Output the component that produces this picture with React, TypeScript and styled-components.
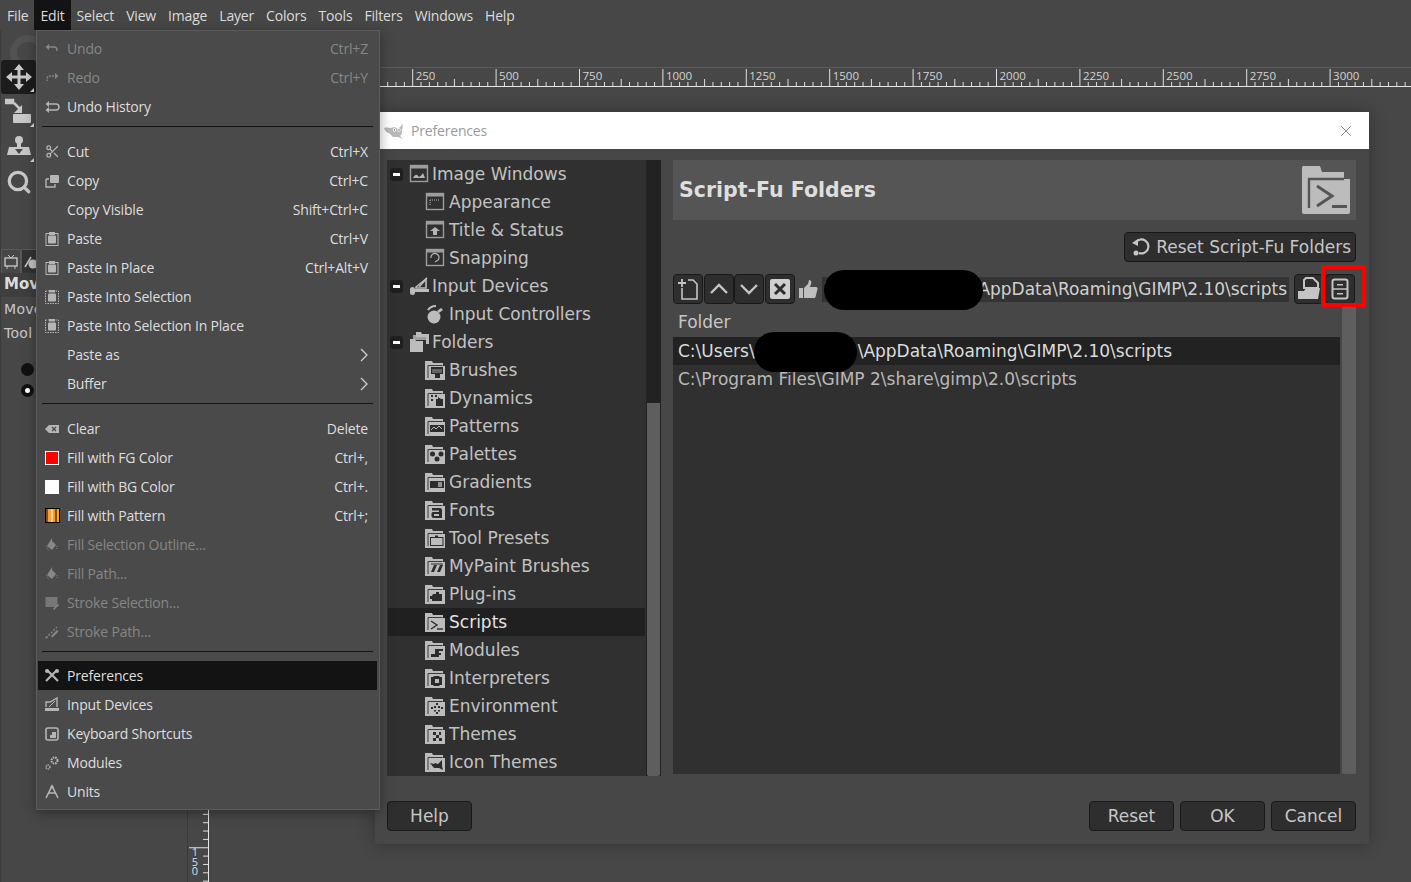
import React from "react";
import styled, { createGlobalStyle } from "styled-components";
import { Scissors, Search, X as CloseX } from "lucide-react";

const Global = createGlobalStyle`
  html, body { margin: 0; padding: 0; background: #474747; overflow: hidden; }
  * { box-sizing: border-box; }
`;

const UI = `"Open Sans", "Noto Sans", sans-serif`;
const DV = `"DejaVu Sans", Verdana, sans-serif`;

const Desktop = styled.div`
  position: relative; width: 1411px; height: 882px; overflow: hidden; background: #474747;
  font-family: ${UI}; color: #dcdcdc; display: flex; flex-direction: column;
`;
const MenuBar = styled.div`display: flex; height: 30px; padding-left: 1px; flex: none;`;
const MenuBarItem = styled.div<{ $open?: boolean }>`
  padding: 0 6px; line-height: 31px; font-size: 14px; letter-spacing: -0.18px;
  background: ${p => (p.$open ? "#131313" : "transparent")};
`;
const Workspace = styled.div`flex: 1; display: flex; min-height: 0;`;
const Toolbox = styled.div`
  width: 188px; flex: none; border-left: 1px solid #3c3c3c; border-right: 1px solid #3a3a3a;
  display: flex; flex-direction: column; position: relative; overflow: hidden;
`;
const Ghost = styled.div`
  position: absolute; left: 9px; top: 5px; width: 36px; height: 36px; border-radius: 50%;
  border: 7px solid #525252;
`;
const ToolGrid = styled.div`display: flex; flex-direction: column; padding-top: 30px; gap: 1px;`;
const ToolBtn = styled.div<{ $active?: boolean }>`
  position: relative; width: 35px; height: 34px; display: flex; align-items: center; justify-content: center;
  border-radius: 3px; color: #c8c8c8; background: ${p => (p.$active ? "#1c1c1c" : "transparent")};
  &::after { content: ""; position: absolute; right: 2px; bottom: 2px; border: 2px solid transparent;
    border-right-color: ${p => (p.$corner ? "#ddd" : "transparent")}; border-bottom-color: ${p => (p.$corner ? "#ddd" : "transparent")}; }
` as any;
const DockTabs = styled.div`display: flex; margin-top: 50px; height: 24px; align-items: stretch;`;
const DockTab = styled.div<{ $active?: boolean }>`
  width: 20px; display: flex; align-items: center; justify-content: center; color: #c4c4c4;
  background: ${p => (p.$active ? "#474747" : "#333")};
  border: 1px solid #5a5a5a; border-bottom: none; border-radius: 2px 2px 0 0;
`;
const DockTitle = styled.div`background: #3e3e3e; height: 24px; line-height: 23px; font: bold 15px/23px ${DV}; padding-left: 3px; white-space: nowrap;`;
const DockText = styled.div`font: 14px/20px ${DV}; padding-left: 3px; margin-top: 2px; color: #c8c8c8; white-space: nowrap; letter-spacing: .3px;`;
const DockTextB = styled(DockText)`margin-top: 4px;`;
const Radio = styled.div<{ $on?: boolean }>`
  width: 13px; height: 13px; border-radius: 50%; background: #111; margin: 0 0 8px 20px; position: relative;
  &:first-of-type { margin-top: 10px; }
  &::after { content: ""; position: absolute; left: 4px; top: 4px; width: 5px; height: 5px; border-radius: 50%;
    background: ${p => (p.$on ? "#fff" : "transparent")}; }
`;
const RadioList = styled.div`display: flex; flex-direction: column; padding-top: 10px;`;
const VRuler = styled.div`width: 21px; flex: none; margin-left: 1px; padding-top: 57px;`;
const Canvas = styled.div`flex: 1; display: flex; flex-direction: column; min-width: 0;`;
const TabStrip = styled.div`height: 38px; flex: none; border-bottom: 1px solid #5c5c5c;`;
const HRuler = styled.div`height: 20px; flex: none;`;

const Menu = styled.div`
  position: absolute; left: 36px; top: 30px; width: 344px; height: 780px; background: #4a4a4a;
  border: 1px solid #5c5c5c; padding: 3px 2px 3px 1px; box-shadow: 0 3px 12px rgba(0,0,0,.35); z-index: 3;
`;
const Row = styled.div<{ $off?: boolean; $sel?: boolean }>`
  height: 29px; display: flex; align-items: center; padding: 0 9px 0 6px; font-size: 14px; letter-spacing: -0.18px;
  color: ${p => (p.$off ? "#868686" : "#dedede")}; background: ${p => (p.$sel ? "#131313" : "transparent")};
`;
const IconSlot = styled.span<{ $off?: boolean }>`
  width: 16px; height: 16px; flex: none; margin-right: 7px; display: flex; align-items: center; justify-content: center;
  color: ${p => (p.$off ? "#878787" : "#b5b5b5")};
`;
const RowLabel = styled.span`flex: 1; white-space: nowrap;`;
const Accel = styled.span`white-space: nowrap;`;
const Sep = styled.div<{ $tail?: number }>`height: 1px; background: #141414; margin: 5px 4px ${p => p.$tail ?? 10}px 4px;`;
const Swatch = styled.span<{ $kind: string }>`
  width: 14px; height: 14px; display: block;
  ${p => p.$kind === "fg" && "background:#f00; border:1px solid #fff;"}
  ${p => p.$kind === "bg" && "background:#fff;"}
  ${p => p.$kind === "pat" && "width:15px; height:15px; border:1px solid #000; background:repeating-linear-gradient(90deg,#8a4b10 0 2px,#f7a33a 2px 5px,#ffd27a 5px 7px,#f39b2b 7px 9px);"}
`;

const Dialog = styled.div`
  position: absolute; left: 375px; top: 112px; width: 994px; height: 732px; background: #474747;
  box-shadow: 0 0 16px rgba(0,0,0,.3); display: flex; flex-direction: column; z-index: 2; font-family: ${DV};
`;
const TitleBar = styled.div`
  height: 37px; flex: none; background: #fff; display: flex; align-items: center; padding: 0 14px 0 9px;
  font: 14px ${UI}; letter-spacing: -.18px; color: #9a9a9a;
`;
const TitleText = styled.span`flex: 1; margin-left: 5px;`;
const Body = styled.div`flex: 1; display: flex; padding: 11px 13px 0 12px; gap: 12px; min-height: 0;`;
const TreePane = styled.div`width: 274px; height: 616px; flex: none; display: flex;`;
const Tree = styled.div`flex: 1; background: #303030;`;
const TreeRow = styled.div<{ $level: number; $sel?: boolean }>`
  height: 28px; display: flex; align-items: center; font-size: 17px; white-space: nowrap;
  padding-left: ${p => (p.$level ? 37 : 2)}px; margin-left: 1px; margin-right: 1px;
  background: ${p => (p.$sel ? "#202020" : "transparent")}; color: ${p => (p.$sel ? "#e2e2e2" : "#c2c2c2")};
`;
const Expander = styled.span`
  width: 13px; height: 13px; border-radius: 3px; background: #1f1f1f; display: flex; align-items: center; justify-content: center;
  margin-right: 6px;
  &::after { content: ""; width: 7px; height: 3px; background: #fff; }
`;
const TreeLabel = styled.span<{ $level: number }>`margin-left: ${p => (p.$level ? 4 : 3)}px;`;
const Trough = styled.div`width: 15px; background: #222; display: flex; flex-direction: column; justify-content: flex-end; padding: 0 1px;`;
const Thumb = styled.div`height: 373px; background: #5e5e5e; border-radius: 0 0 2px 2px;`;
const Page = styled.div`flex: 1; display: flex; flex-direction: column; min-width: 0;`;
const Header = styled.div`
  height: 60px; flex: none; background: #555; display: flex; align-items: center; justify-content: space-between; padding: 0 6px;
`;
const Heading = styled.div`font-size: 20.5px; font-weight: bold; color: #dedede;`;
const ResetRow = styled.div`display: flex; justify-content: flex-end; margin-top: 12px;`;
const Btn = styled.div<{ $w?: number }>`
  height: 30px; ${p => (p.$w ? `width:${p.$w}px;` : "")} background: #2e2e2e; border: 1px solid #191919; border-radius: 4px;
  display: flex; align-items: center; justify-content: center; color: #c6c6c6; font-size: 17px; flex: none; white-space: nowrap;
`;
const ResetBtn = styled(Btn)`padding: 0 4px 0 5px; gap: 4px;`;
const EntryRow = styled.div`display: flex; align-items: center; margin-top: 12px; height: 30px; position: relative;`;
const IconBtn = styled(Btn)`width: 30px; color: #c4c4c4; margin-right: 0.5px;`;
const ThumbMark = styled.span`width: 20px; margin: 0 4px 0 3px; display: flex; flex: none; color: #bfbfbf;`;
const Entry = styled.div`
  flex: none; width: 467px; height: 25px; background: #333; color: #d0d0d0; font-size: 17px; display: flex; align-items: center;
  justify-content: space-between; padding: 0 2px 0 3px; margin-right: 5px; position: relative; white-space: nowrap;
`;
const EntryBlot = styled.div`position: absolute; left: 2px; top: -7px; width: 159px; height: 40px; background: #000; border-radius: 20px;`;
const RedBox = styled.div`
  position: absolute; right: -10px; top: -9px; width: 45px; height: 42px; border: 4px solid #f00; border-radius: 2px; pointer-events: none;
`;
const FolderPane = styled.div`display: flex; margin-top: 3px; height: 467px; gap: 2px;`;
const Table = styled.div`flex: 1; background: #303030; display: flex; flex-direction: column; min-width: 0;`;
const TableHead = styled.div`height: 30px; background: #474747; color: #c6c6c6; font-size: 17px; line-height: 30px; padding-left: 5px; flex: none;`;
const TableRow = styled.div<{ $sel?: boolean }>`
  height: 28px; line-height: 28px; font-size: 17px; padding-left: 5px; white-space: nowrap; flex: none;
  background: ${p => (p.$sel ? "#222" : "transparent")}; color: ${p => (p.$sel ? "#dcdcdc" : "#b9b9b9")};
`;
const Gap = styled.span`display: inline-block; width: 103px; height: 1px; position: relative;`;
const RowBlot = styled.span`position: absolute; left: -1px; top: -24px; width: 103px; height: 40px; background: #000; border-radius: 20px;`;
const TableScroll = styled.div`width: 14px; background: #5e5e5e; border-radius: 0 0 2px 2px; flex: none;`;
const Footer = styled.div`
  display: flex; justify-content: space-between; padding: 0 13px 13px 12px; flex: none; height: 43px; margin-top: -1px;
`;
const FootGroup = styled.div`display: flex; gap: 6px;`;
const Spacer = styled.div`height: 25px; flex: none;`;

/* ---------- drawings ---------- */
const S = ({ children, size = 16, box = 16 }: { children: React.ReactNode; size?: number; box?: number }) => (
  <svg width={size} height={size} viewBox={`0 0 ${box} ${box}`} fill="currentColor" stroke="none" aria-hidden>
    {children}
  </svg>
);
const L = (p: any) => <path fill="none" stroke="currentColor" strokeWidth={1.4} {...p} />;

const menuIcons: Record<string, React.ReactNode> = {
  undo: <S><L d="M3 6h7a3 3 0 0 1 3 3v1" /><path d="M1.5 6 5 3v6z" /></S>,
  redo: <S><L d="M13 6H6a3 3 0 0 0-3 3v2" strokeDasharray="2 1" /><path d="M14.5 6 11 3v6z" /></S>,
  history: <S><L d="M4 5h8M12 11H5" strokeWidth={1.6} /><L d="M12 5a3 3 0 0 1 0 6" /><path d="M1.5 5 5 2v6zM1.5 11l3.5-3v6z" /></S>,
  cut: <Scissors size={15} strokeWidth={2} />,
  copy: <S><rect x="6" y="2" width="9" height="8" rx="1" /><L d="M2 6h3M2 6v8h9v-3" /></S>,
  paste: <S><rect x="2" y="2.5" width="12" height="12" fill="none" stroke="currentColor" /><rect x="4" y="4.5" width="8" height="8" rx="1" /><rect x="5" y="1" width="6" height="3" /></S>,
  pasteSel: <S><rect x="1.5" y="2" width="13" height="12.5" fill="none" stroke="currentColor" strokeDasharray="1.5 1" /><rect x="4" y="4.5" width="8" height="8" rx="1" /><rect x="5" y="1" width="6" height="2.5" /></S>,
  clear: <S><path d="M1 8l4-4h10v8H5z" /><path d="M8 6l4 4M12 6l-4 4" stroke="#4a4a4a" strokeWidth={1.3} /></S>,
  fill: <S><path d="M8 1v3l4 4-4 5-5-4z" /><path d="M2 9l3 5M13 9v3" stroke="currentColor" fill="none" strokeDasharray="1 1" /></S>,
  strokeSel: <S><rect x="1.5" y="2" width="12" height="10" opacity=".75" /><path d="M9 14l5-5 1 1-5 5z" /></S>,
  strokePath: <S><L d="M2 14 13 3" strokeDasharray="2 1.5" /><path d="M7 12l6-6 1.5 1.5-6 6z" /><circle cx="2.5" cy="13.5" r="1" /></S>,
  prefs: <S><L d="M3 2l11 11M13 2 2 13" strokeWidth={2.2} /><circle cx="13" cy="3" r="2" /><circle cx="3" cy="3" r="2" /></S>,
  input: <S><path d="M1 11h14v3H1z" /><L d="M2 10V5h4l7-4v9" /><path d="M5 10l6-6" stroke="currentColor" /></S>,
  keys: <S><rect x="2" y="2" width="12" height="12" rx="2" fill="none" stroke="currentColor" strokeWidth={1.6} /><rect x="8" y="6" width="4" height="6" /><rect x="6" y="9" width="3" height="3" /></S>,
  modules: <S><circle cx="10.5" cy="5.5" r="3" fill="none" stroke="currentColor" strokeWidth={2} strokeDasharray="1.6 .8" /><circle cx="4" cy="12" r="2" fill="none" stroke="currentColor" strokeWidth={1.4} strokeDasharray="1.2 .8" /></S>,
  units: <S><L d="M2 14 8 2l6 12M4 9h8" strokeWidth={1.6} /><circle cx="8" cy="3" r="1.6" /></S>,
};

const Frame = ({ children }: { children?: React.ReactNode }) => (
  <S size={20} box={20}>
    <rect x="1.5" y="1.5" width="17" height="16" fill="none" stroke="#9d9d9d" strokeWidth={1.4} />
    <rect x="1" y="1" width="18" height="3.5" fill="#9d9d9d" />
    <g fill="#b5b5b5" stroke="#b5b5b5">{children}</g>
  </S>
);

const Folder = ({ children }: { children?: React.ReactNode }) => (
  <S size={20} box={20}>
    <path d="M0 1h7l1 2h10v3h2v14H0z" fill="#bcbcbc" />
    <path d="M3 5.5h14.5M3 5.5V18" stroke="#3b3b3b" strokeWidth={1} fill="none" />
    <g fill="#2c2c2c" stroke="none">{children}</g>
  </S>
);

const treeIcons: Record<string, React.ReactNode> = {
  win: <Frame><path d="M4 14c2-4 4-4 5-2s3 0 5-3l2 5z" stroke="none" /></Frame>,
  app: <Frame><path d="M5 8h10M5 8v6" fill="none" strokeDasharray="1 1" /></Frame>,
  title: <Frame><path d="M10 7l5 4h-3v4H8v-4H5z" stroke="none" /></Frame>,
  snap: <Frame><path d="M6 10a4 4 0 1 1 7 2l-3 2" fill="none" strokeWidth={1.2} /></Frame>,
  input: <S size={20} box={20}><g fill="#bcbcbc"><path d="M7 11 17 3v9H7z" fillOpacity="0" stroke="#bcbcbc" strokeWidth={1.6} /><path d="M6 13h14v3H6z" /><rect x="1" y="11" width="5" height="8" rx="2.5" /><path d="M10 11l8-9" stroke="#bcbcbc" strokeWidth={1.6} /></g></S>,
  ctrl: <S size={20} box={20}><g fill="#bcbcbc"><circle cx="9" cy="13" r="6.5" /><path d="M3 6a9 9 0 0 1 8-4" fill="none" stroke="#bcbcbc" strokeWidth={2.2} /><path d="M12 7l4-3 2 2-4 3z" /></g></S>,
  folders: <S size={20} box={20}><g fill="#bcbcbc"><path d="M7 0h5l1 2h7v10h-3V5H7z" /><path d="M4 3h5l1 2h7v3H4z" opacity=".8" /><path d="M1 7h5l1 2h7v11H1z" /></g></S>,
  brushes: <Folder><path d="M6 7h12v7h-3v4h-5v-4H6z" /><path d="M7 10h10M7 12h10" stroke="#bcbcbc" strokeWidth={.8} /></Folder>,
  dynamics: <Folder><rect x="6" y="7" width="2" height="2" /><rect x="10" y="7" width="2" height="2" /><rect x="6" y="11" width="2" height="2" /><path d="M11 11h2v-2l3 2h2v7h-7z" /></Folder>,
  patterns: <Folder><rect x="5" y="9" width="14" height="7" /><path d="M6 14l3-3 2 2 3-3 3 3" stroke="#bcbcbc" strokeWidth={1} fill="none" /></Folder>,
  palettes: <Folder><circle cx="7.5" cy="10" r="2.5" /><circle cx="16" cy="10" r="2.5" /><circle cx="12" cy="15" r="2.5" /></Folder>,
  gradients: <Folder><rect x="5" y="9" width="14" height="7" /><rect x="13" y="10" width="4" height="5" fill="#bcbcbc" opacity=".7" /></Folder>,
  fonts: <Folder><path d="M7 8h8a2 2 0 0 1 2 2v8H9a2.5 2.5 0 0 1-2.5-2.5V14A2 2 0 0 1 9 12h5v-1.500H7z" /><rect x="9" y="14" width="5" height="2" fill="#bcbcbc" /></Folder>,
  presets: <Folder><rect x="5.500" y="9.500" width="12.500" height="8" fill="none" stroke="#2c2c2c" /><rect x="10" y="7.500" width="3" height="2" /></Folder>,
  mypaint: <Folder><path d="M6 16 9 9h3l-3 7zM12 16l3-7h3l-3 7z" /><path d="M6 8h12" stroke="#2c2c2c" /></Folder>,
  plugins: <Folder><path d="M8 10h3V8h3v2h3v7H7v-2h-2v-3h2z" /></Folder>,
  scripts: <Folder><path d="M6 9l6 4-6 4" fill="none" stroke="#2c2c2c" strokeWidth={1.4} /><path d="M12 17h6" stroke="#2c2c2c" strokeWidth={1.4} /></Folder>,
  modules: <Folder><path d="M10 9h8v2h-4v2h2v2h-2v2H6v-3h4z" /></Folder>,
  interp: <Folder><path d="M6 9l2 0 1-1h5l1 1h2v8h-2l-1 1H9l-1-1H6z" /><rect x="10" y="11" width="4" height="4" fill="#bcbcbc" /></Folder>,
  env: <Folder><g><rect x="11" y="7" width="2" height="2" /><rect x="11" y="16" width="2" height="2" /><rect x="6" y="11" width="2" height="2" /><rect x="9" y="10" width="2" height="2" /><rect x="13" y="10" width="2" height="2" /><rect x="9" y="14" width="2" height="1.500" /><rect x="13" y="14" width="2" height="1.500" /><rect x="16" y="11" width="2" height="2" /></g></Folder>,
  themes: <Folder><path d="M8 8h3v3H8zM11 11h3v3h-3zM8 14h3v3H8zM14 14h3v3h-3zM14 8h2v3h-2z" /></Folder>,
  iconThemes: <Folder><path d="M5 11l4 1 1-1 3 1 4-4v6l1 4-4-2H9z" /></Folder>,
};

const Wilber = () => (
  <svg width="22" height="18" viewBox="0 0 22 18" aria-hidden>
    <path d="M0 6c3-1 5 0 7 0 2-1 5-1 7 1l5-5-1 7c0 3-1 4-2 5l3 3-5-2H9L5 11C3 11 1 9 0 6z" fill="#b9b9b9" />
    <circle cx="10.500" cy="8" r="1.700" fill="#fff" /><circle cx="15" cy="8" r="1.700" fill="#fff" />
    <circle cx="10.500" cy="8" r=".7" fill="#555" /><circle cx="15" cy="8" r=".7" fill="#555" />
  </svg>
);

const BigFolder = () => (
  <svg width="48" height="48" viewBox="0 0 48 48" aria-hidden>
    <path d="M1 0h17l2 6h22v7h6v33a2 2 0 0 1-2 2H2a2 2 0 0 1-2-2V1z" fill="#bcbcbc" />
    <path d="M7 42V13h35" fill="none" stroke="#555" strokeWidth={2.400} />
    <path d="M15 20l15 10-15 10" fill="none" stroke="#555" strokeWidth={3} />
    <path d="M30 40.500h15" stroke="#555" strokeWidth={3} />
  </svg>
);

const Ruler = () => {
  const w = 1201, x0 = 329.3 - 210, step = 83.4, out: React.ReactNode[] = [];
  for (let i = 0; i * step / 10 + x0 < w; i++) {
    const x = x0 + (i * step) / 10;
    const major = i % 10 === 0;
    const mid = i % 5 === 0;
    out.push(<line key={i} x1={x} x2={x} y1={major ? 1 : mid ? 11 : 14} y2={18} stroke="#e0e0e0" strokeWidth={1} />);
    if (major && i > 0) out.push(<text key={"t" + i} x={x + 3} y={12} fontSize="11.500" fontFamily={UI} fill="#d4d4d4">{i * 25}</text>);
  }
  return (
    <svg width={w} height={20} aria-hidden>
      {out}
      <line x1={0} x2={w} y1={18.500} y2={18.500} stroke="#e6e6e6" />
    </svg>
  );
};

const SideRuler = () => {
  const h = 100, ticks: React.ReactNode[] = [];
  for (let i = 0; i < 12; i++) {
    const y = 2 + i * 8.35;
    ticks.push(<line key={i} x1={i === 5 ? 0 : i === 10 ? 8 : 14} x2={19} y1={y} y2={y} stroke="#e0e0e0" />);
  }
  return (
    <svg width={20} height={h} aria-hidden>
      {ticks}
      <line x1={19.500} x2={19.500} y1={0} y2={h} stroke="#e6e6e6" />
      {["1", "5", "0"].map((d, i) => (
        <text key={i} x={6} y={52 + i * 9.500} fontSize="11" fontFamily={UI} fill="#cfe0e8" textAnchor="middle">{d}</text>
      ))}
    </svg>
  );
};

/* ---------- data ---------- */
type Item = { l: string; a?: string; i?: string; off?: boolean; sub?: boolean; sel?: boolean; sw?: string } | { sep: number };
const items: Item[] = [
  { l: "Undo", a: "Ctrl+Z", i: "undo", off: true },
  { l: "Redo", a: "Ctrl+Y", i: "redo", off: true },
  { l: "Undo History", i: "history" },
  { sep: 10 },
  { l: "Cut", a: "Ctrl+X", i: "cut" },
  { l: "Copy", a: "Ctrl+C", i: "copy" },
  { l: "Copy Visible", a: "Shift+Ctrl+C" },
  { l: "Paste", a: "Ctrl+V", i: "paste" },
  { l: "Paste In Place", a: "Ctrl+Alt+V", i: "paste" },
  { l: "Paste Into Selection", i: "pasteSel" },
  { l: "Paste Into Selection In Place", i: "pasteSel" },
  { l: "Paste as", sub: true },
  { l: "Buffer", sub: true },
  { sep: 10 },
  { l: "Clear", a: "Delete", i: "clear" },
  { l: "Fill with FG Color", a: "Ctrl+,", sw: "fg" },
  { l: "Fill with BG Color", a: "Ctrl+.", sw: "bg" },
  { l: "Fill with Pattern", a: "Ctrl+;", sw: "pat" },
  { l: "Fill Selection Outline...", i: "fill", off: true },
  { l: "Fill Path...", i: "fill", off: true },
  { l: "Stroke Selection...", i: "strokeSel", off: true },
  { l: "Stroke Path...", i: "strokePath", off: true },
  { sep: 9 },
  { l: "Preferences", i: "prefs", sel: true },
  { l: "Input Devices", i: "input" },
  { l: "Keyboard Shortcuts", i: "keys" },
  { l: "Modules", i: "modules" },
  { l: "Units", i: "units" },
];
const tree: [string, number, string][] = [
  ["Image Windows", 0, "win"], ["Appearance", 1, "app"], ["Title & Status", 1, "title"], ["Snapping", 1, "snap"],
  ["Input Devices", 0, "input"], ["Input Controllers", 1, "ctrl"], ["Folders", 0, "folders"], ["Brushes", 1, "brushes"],
  ["Dynamics", 1, "dynamics"], ["Patterns", 1, "patterns"], ["Palettes", 1, "palettes"], ["Gradients", 1, "gradients"],
  ["Fonts", 1, "fonts"], ["Tool Presets", 1, "presets"], ["MyPaint Brushes", 1, "mypaint"], ["Plug-ins", 1, "plugins"],
  ["Scripts", 1, "scripts"], ["Modules", 1, "modules"], ["Interpreters", 1, "interp"], ["Environment", 1, "env"],
  ["Themes", 1, "themes"], ["Icon Themes", 1, "iconThemes"],
];
const bar = ["File", "Edit", "Select", "View", "Image", "Layer", "Colors", "Tools", "Filters", "Windows", "Help"];

const Chevron = ({ up }: { up?: boolean }) => (
  <svg width="20" height="20" viewBox="0 0 20 20" aria-hidden>
    <path d={up ? "M2 14l8-8 8 8" : "M2 6l8 8 8-8"} fill="none" stroke="currentColor" strokeWidth={2.400} />
  </svg>
);

export default function App() {
  return (
    <Desktop>
      <Global />
      <MenuBar>
        {bar.map(b => <MenuBarItem key={b} $open={b === "Edit"}>{b}</MenuBarItem>)}
      </MenuBar>
      <Workspace>
        <Toolbox>
          <Ghost />
          <ToolGrid>
            <ToolBtn $active $corner>
              <S size={26} box={26}>
                <path d="M13 3v20M3 13h20" stroke="currentColor" strokeWidth={3} />
                <path d="M13 0l5 6H8zM13 26l5-6H8zM0 13l6-5v10zM26 13l-6-5v10z" />
              </S>
            </ToolBtn>
            <ToolBtn $corner>
              <S size={28} box={28}>
                <path d="M1 2h7v3H1zM9 5l7 7" stroke="currentColor" strokeWidth={2.500} />
                <path d="M17 7v8H9z" /><rect x="8" y="16" width="18" height="9" rx="1" />
              </S>
            </ToolBtn>
            <ToolBtn $corner>
              <S size={26} box={26}>
                <circle cx="13" cy="6" r="4" /><path d="M11 8h4v5h8l2 8H1l2-8h8z" />
                <path d="M9 15h8l-4 5z" fill="#474747" />
              </S>
            </ToolBtn>
            <ToolBtn><Search size={26} strokeWidth={3} /></ToolBtn>
          </ToolGrid>
          <DockTabs>
            <DockTab $active>
              <S size={14} box={14}><rect x="1" y="3" width="12" height="8" fill="none" stroke="currentColor" strokeWidth={1.400} /><path d="M4 0l3 3 3-3M3 11v3M11 11v3" stroke="currentColor" fill="none" /></S>
            </DockTab>
            <DockTab>
              <S size={14} box={14}><path d="M1 12 7 2" stroke="currentColor" strokeWidth={1.500} /><circle cx="9" cy="9" r="4.500" /></S>
            </DockTab>
          </DockTabs>
          <DockTitle>Move</DockTitle>
          <DockText>Move</DockText>
          <DockTextB>Tool Toggle</DockTextB>
          <RadioList>
            <Radio />
            <Radio $on />
          </RadioList>
        </Toolbox>
        <VRuler><Spacer /><SpacerOffset /><SideRuler /></VRuler>
        <Canvas>
          <TabStrip />
          <HRuler><Ruler /></HRuler>
        </Canvas>
      </Workspace>

      <Menu>
        {items.map((it, n) => {
          if ("sep" in it) return <Sep key={n} $tail={it.sep} />;
          return (
            <Row key={n} $off={it.off} $sel={it.sel}>
              <IconSlot $off={it.off}>
                {it.sw ? <Swatch $kind={it.sw} /> : it.i ? menuIcons[it.i] : null}
              </IconSlot>
              <RowLabel>{it.l}</RowLabel>
              {it.a && <Accel>{it.a}</Accel>}
              {it.sub && (
                <svg width="8" height="14" viewBox="0 0 8 14" aria-hidden>
                  <path d="M1 1l6 6-6 6" fill="none" stroke="#d0d0d0" strokeWidth={1.300} />
                </svg>
              )}
            </Row>
          );
        })}
      </Menu>

      <Dialog>
        <TitleBar>
          <Wilber />
          <TitleText>Preferences</TitleText>
          <CloseX size={18} strokeWidth={1} color="#666" />
        </TitleBar>
        <Body>
          <TreePane>
            <Tree>
              {tree.map(([label, level, icon]) => (
                <TreeRow key={label + level} $level={level} $sel={label === "Scripts"}>
                  {level === 0 && <Expander />}
                  {treeIcons[icon]}
                  <TreeLabel $level={level}>{label}</TreeLabel>
                </TreeRow>
              ))}
            </Tree>
            <Trough><Thumb /></Trough>
          </TreePane>
          <Page>
            <Header>
              <Heading>Script-Fu Folders</Heading>
              <BigFolder />
            </Header>
            <ResetRow>
              <ResetBtn>
                <S size={22} box={22}>
                  <path d="M6 6a7 7 0 1 1 3 11" fill="none" stroke="currentColor" strokeWidth={2.200} />
                  <path d="M2 7l6-4v7z" /><circle cx="6" cy="17" r="2.500" />
                </S>
                Reset Script-Fu Folders
              </ResetBtn>
            </ResetRow>
            <EntryRow>
              <IconBtn>
                <svg width="22" height="24" viewBox="0 0 22 24" aria-hidden>
                  <path d="M11 3h5l4 4v15H5V11" fill="none" stroke="currentColor" strokeWidth={1.600} />
                  <path d="M5 2v8M1 6h8" stroke="currentColor" strokeWidth={1.800} />
                </svg>
              </IconBtn>
              <IconBtn><Chevron up /></IconBtn>
              <IconBtn><Chevron /></IconBtn>
              <IconBtn>
                <svg width="22" height="22" viewBox="0 0 22 22" aria-hidden>
                  <rect x="1" y="1" width="20" height="20" rx="2" fill="#cfcfcf" />
                  <path d="M6 6l10 10M16 6 6 16" stroke="#2e2e2e" strokeWidth={3} />
                </svg>
              </IconBtn>
              <ThumbMark>
                <S size={20} box={20}>
                  <rect x="1" y="9" width="4" height="10" />
                  <path d="M6 9l4-4 1-4c2 0 3 2 2 4l-1 3h6c1 0 2 1 1.500 2l-2 8c-.3 1-1 1-2 1H6z" />
                </S>
              </ThumbMark>
              <Entry>
                <span>\</span>
                <EntryBlot />
                <span>AppData\Roaming\GIMP\2.10\scripts</span>
              </Entry>
              <IconBtn>
                <svg width="24" height="24" viewBox="0 0 24 24" aria-hidden>
                  <path d="M9 1h7l5 5v5H7V3z" fill="none" stroke="currentColor" strokeWidth={2} />
                  <path d="M1 14h6l2-3h14l-2 11H1z" fill="currentColor" />
                </svg>
              </IconBtn>
              <IconBtn>
                <svg width="18" height="22" viewBox="0 0 18 22" aria-hidden>
                  <rect x="1.500" y="1.500" width="15" height="19" rx="2" fill="none" stroke="currentColor" strokeWidth={2} />
                  <path d="M1 11h16" stroke="currentColor" strokeWidth={1.500} />
                  <path d="M6 6h6v1.500H6zM6 15h6v1.500H6z" fill="currentColor" />
                </svg>
              </IconBtn>
              <RedBox />
            </EntryRow>
            <FolderPane>
              <Table>
                <TableHead>Folder</TableHead>
                <TableRow $sel>C:\Users\<Gap><RowBlot /></Gap>\AppData\Roaming\GIMP\2.10\scripts</TableRow>
                <TableRow>C:\Program Files\GIMP 2\share\gimp\2.0\scripts</TableRow>
              </Table>
              <TableScroll />
            </FolderPane>
          </Page>
        </Body>
        <Footer>
          <Btn $w={85}>Help</Btn>
          <FootGroup>
            <Btn $w={85}>Reset</Btn>
            <Btn $w={85}>OK</Btn>
            <Btn $w={85}>Cancel</Btn>
          </FootGroup>
        </Footer>
      </Dialog>
    </Desktop>
  );
}

const SpacerOffset = styled.div`height: 692px; flex: none;`;
